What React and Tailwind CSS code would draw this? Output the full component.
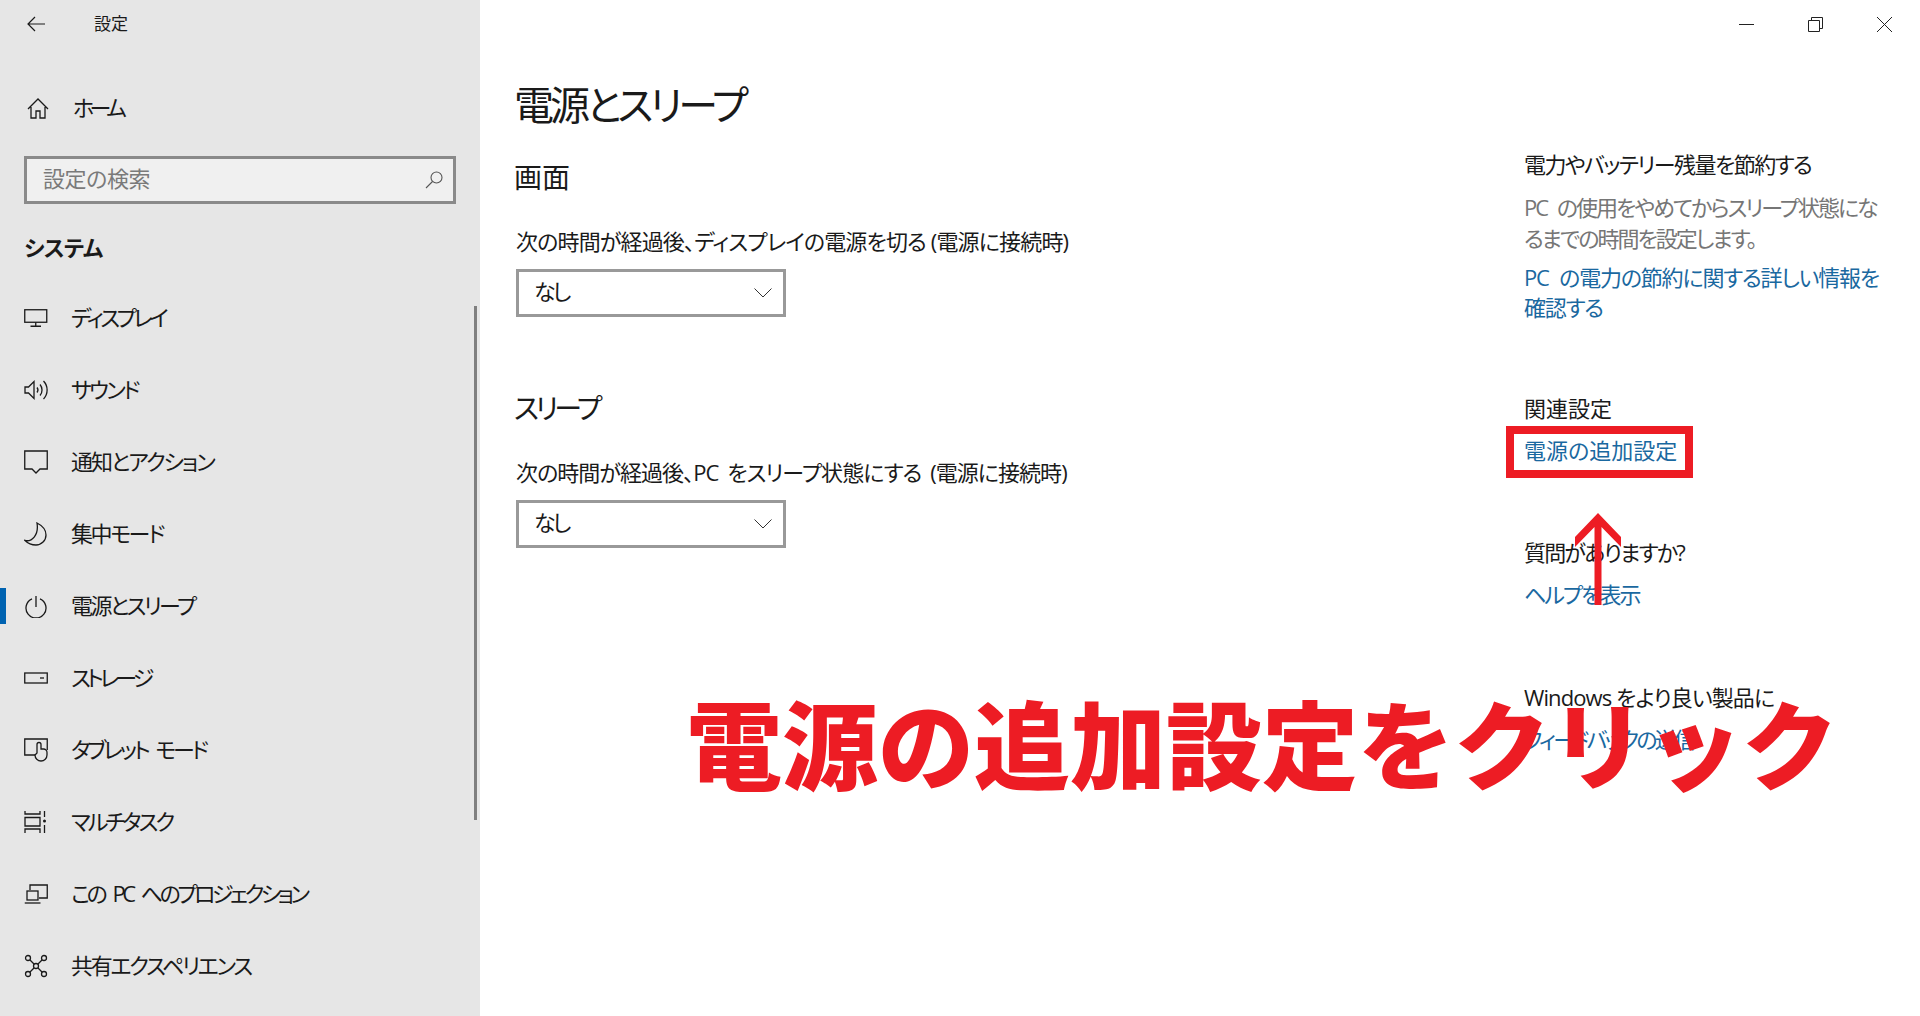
const jp = "font-['Open_Sans','Noto_Sans_CJK_JP',sans-serif] [font-feature-settings:'palt']";

function Icon({ children }) {
  return (
    <svg viewBox="0 0 24 24" fill="none" stroke="#1a1a1a" strokeWidth="1.3" className="h-6 w-6 shrink-0">
      {children}
    </svg>
  );
}

const navItems = [
  { label: 'ディスプレイ', tracking: 'tracking-[-3.4px]', icon: <><rect x="0.75" y="3.75" width="22" height="12.5" /><path d="M11.75 16.5v3.5M6.5 20.25h10.5" /></> },
  { label: 'サウンド', tracking: 'tracking-[-2.7px]', icon: <><path d="M1 9h3.5L10 3.5v17L4.5 15H1z" /><path d="M13 9.5a4 4 0 0 1 0 5M16 6.5a8.500 8.500 0 0 1 0 11M19.500 3a13 13 0 0 1 0 18" /></> },
  { label: '通知とアクション', tracking: 'tracking-[-2px]', icon: <path d="M.75 1h22.500v18H16l-4 4-4-4H.75z" /> },
  { label: '集中モード', tracking: 'tracking-[-2.4px]', icon: <path d="M13 1c5 2.500 9 7 9 12a10 10 0 0 1-10 10c-4.500 0-8-1.500-11-4.500C8 20 15 13 13 1z" /> },
  { label: '電源とスリープ', tracking: 'tracking-[-2.6px]', active: true, icon: <><path d="M12 2v11" /><path d="M8 4.800a10 10 0 1 0 8 0" /></> },
  { label: 'ストレージ', tracking: 'tracking-[-3.9px]', icon: <><rect x="0.75" y="7" width="22.500" height="10" /><path d="M16 12h4" /></> },
  { label: 'タブレット モード', tracking: 'tracking-[-3.1px] [word-spacing:5px]', icon: <><path d="M11 17H.75V1H23.250v11" /><path d="M13 15V6.500a2 2 0 0 1 4 0V11h2.500a3.500 3.500 0 0 1 3.500 3.500V17a6 6 0 0 1-12 0z" /></> },
  { label: 'マルチタスク', tracking: 'tracking-[-3px]', icon: <><path d="M1 1v3h15V1M1 7.500h15v8.500H1zM1 23v-4h15v4M20.500 1v6M20.500 15v8" /><circle cx="20.500" cy="11" r="1.500" fill="#1a1a1a" stroke="none" /></> },
  { label: 'この PC へのプロジェクション', tracking: 'tracking-[-3.5px] [word-spacing:6px]', icon: <><path d="M6 8V3h17.250v13H15" /><rect x="3" y="9" width="11" height="9" /><path d="M.75 21H16.500" /></> },
  { label: '共有エクスペリエンス', tracking: 'tracking-[-2.3px]', icon: <><circle cx="4" cy="4" r="2.500" /><circle cx="20" cy="4" r="2.500" /><circle cx="4" cy="20" r="2.500" /><circle cx="20" cy="20" r="2.500" /><circle cx="12" cy="12" r="2.500" /><path d="M6 6l4 4M18 6l-4 4M6 18l4-4M18 18l-4-4" /></> },
];

function Sidebar() {
  return (
    <aside className="relative h-full w-[480px] shrink-0 bg-[#e6e6e6] text-[#1a1a1a]">
      {/* Header */}
      <div className="flex h-12 items-center pl-[27px]">
        <svg viewBox="0 0 18 16" fill="none" stroke="#1a1a1a" strokeWidth="1.2" className="h-4 w-[18px]">
          <path d="M1 8h17M8 1 1 8l7 7" />
        </svg>
        <span className="ml-[49px] text-[17px] leading-6">設定</span>
      </div>

      {/* Home */}
      <div className="mt-6 flex h-[72px] items-center pl-[27px]">
        <svg viewBox="0 0 22 21" fill="none" stroke="#1a1a1a" strokeWidth="1.3" className="h-[21px] w-[22px]">
          <path d="M1 11 11 1l10 10M4 9v11h5v-7h4v7h5V9" />
        </svg>
        <span className="mb-[2px] ml-6 text-[22px] tracking-[-4.6px]">ホーム</span>
      </div>

      {/* Search */}
      <div className="mx-6 mt-3 flex h-12 items-center justify-between border-[3px] border-[#8a8a8a] bg-[#f0f0f0] pl-[16px] pr-[10px]">
        <span className="mb-1 text-[22px] tracking-[-0.4px] text-[#7a7a7a]">設定の検索</span>
        <svg viewBox="0 0 18 18" fill="none" stroke="#555" strokeWidth="1.1" className="h-[18px] w-[18px]">
          <circle cx="11.500" cy="6.500" r="5.500" />
          <path d="M7.500 10.500 1 17" />
        </svg>
      </div>

      <div className="ml-6 mt-6 flex h-10 items-center pb-[2px] text-[22px] font-bold tracking-[-0.6px]">システム</div>

      {/* Nav */}
      <nav className="mt-[14px]">
        {navItems.map((item) => (
          <div key={item.label} className="relative flex h-[72px] items-center pl-6">
            {item.active && <span className="absolute left-0 top-[18px] h-9 w-[6px] bg-[#0063b1]" />}
            <Icon>{item.icon}</Icon>
            <span className={`mb-[2px] ml-[23px] whitespace-nowrap text-[22px] ${item.tracking}`}>{item.label}</span>
          </div>
        ))}
      </nav>

      {/* Scrollbar */}
      <span className="absolute left-[474px] top-[306px] h-[514px] w-[3px] bg-[#7f7f7f]" />
    </aside>
  );
}

function Dropdown({ className }) {
  return (
    <div className={`flex h-12 w-[270px] items-center justify-between border-[3px] border-[#999999] bg-white pl-[15px] pr-[11px] ${className}`}>
      <span className="mb-1 text-[22px] tracking-[-3px] text-[#1a1a1a]">なし</span>
      <svg viewBox="0 0 18 10" fill="none" stroke="#333" strokeWidth="1" className="h-[10px] w-[18px]">
        <path d="m.5.5 8.500 8.500 8.500-8.500" />
      </svg>
    </div>
  );
}

function WindowControls() {
  return (
    <div className="flex h-12 items-center justify-end pr-7">
      <svg viewBox="0 0 15 15" fill="none" stroke="#222" strokeWidth="1" className="h-[15px] w-[15px]">
        <path d="M0 7.500h15" />
      </svg>
      <svg viewBox="0 0 15 15" fill="none" stroke="#222" strokeWidth="1" className="ml-[54px] h-[15px] w-[15px]">
        <path d="M.5 3.500h11v11H.500zM3.500 3.500v-3h11v11h-3" />
      </svg>
      <svg viewBox="0 0 15 15" fill="none" stroke="#222" strokeWidth="1" className="ml-[54px] h-[15px] w-[15px]">
        <path d="m0 0 15 15M15 0 0 15" />
      </svg>
    </div>
  );
}

export default function App() {
  return (
    <div className={`relative flex h-[1016px] w-[1920px] overflow-hidden bg-white ${jp}`}>
      <Sidebar />

      <main className="flex min-w-0 flex-1 flex-col text-[#1a1a1a]">
        <WindowControls />

        <div className="flex flex-1">
          {/* Settings */}
          <section className="w-[1044px] shrink-0 pl-[34px]">
            <h1 className="mt-[29px] text-[40px] leading-[56px] tracking-[-3.9px]">電源とスリープ</h1>
            <h2 className="mt-6 text-[28px] leading-10">画面</h2>
            <p className="ml-[2px] mt-[28px] whitespace-nowrap text-[22px] leading-8 tracking-[-0.85px]">次の時間が経過後、ディスプレイの電源を切る (電源に接続時)</p>
            <Dropdown className="ml-[2px] mt-[12px]" />
            <h2 className="mt-[71px] text-[28px] leading-10 tracking-[-3.8px]">スリープ</h2>
            <p className="ml-[2px] mt-[28px] whitespace-nowrap text-[22px] leading-8 tracking-[-0.95px] [word-spacing:4px]">次の時間が経過後、PC をスリープ状態にする (電源に接続時)</p>
            <Dropdown className="ml-[2px] mt-3" />
          </section>

          {/* Related links */}
          <section className="w-[362px] shrink-0 pt-[101px] text-[22px] leading-[30px]">
            <h3 className="tracking-[-1.55px]">電力やバッテリー残量を節約する</h3>
            <p className="mt-[13px] whitespace-nowrap leading-[31px] tracking-[-2px] text-[#767676] [word-spacing:6px]">
              PC の使用をやめてからスリープ状態にな<br />るまでの時間を設定します。
            </p>
            <a className="mt-2 block whitespace-nowrap tracking-[-1.2px] text-[#1a68a0] [word-spacing:6px]">
              PC の電力の節約に関する詳しい情報を<br />確認する
            </a>
            <h3 className="mt-[71px]">関連設定</h3>
            <a className="relative mt-3 block text-[#1a68a0]">
              電源の追加設定
              <span className="absolute left-[-18px] top-[-9px] h-[52px] w-[187px] border-8 border-[#ed1c24]" />
            </a>
            <h3 className="mt-[72px] tracking-[-1.8px]">質問がありますか?</h3>
            <a className="mt-3 block tracking-[-2px] text-[#1a68a0]">ヘルプを表示</a>
            <h3 className="mt-[73px] whitespace-nowrap tracking-[-0.9px]">Windows をより良い製品に</h3>
            <a className="mt-3 block tracking-[-2.8px] text-[#1a68a0]">フィードバックの送信</a>
          </section>
        </div>
      </main>

      {/* Annotation */}
      <svg viewBox="0 0 50 94" fill="#ed1c24" className="absolute left-[1573px] top-[512px] h-[94px] w-[50px]">
        <path d="M25 1 48 25v10L28.500 15v78h-7V15L2 35V25z" />
      </svg>
      <div className="absolute left-[686px] top-[677px] whitespace-nowrap font-['Noto_Sans_CJK_JP',sans-serif] text-[96px] font-black leading-[128px] text-[#ed1c24] [font-feature-settings:normal]">
        電源の追加設定をクリック
      </div>
    </div>
  );
}
